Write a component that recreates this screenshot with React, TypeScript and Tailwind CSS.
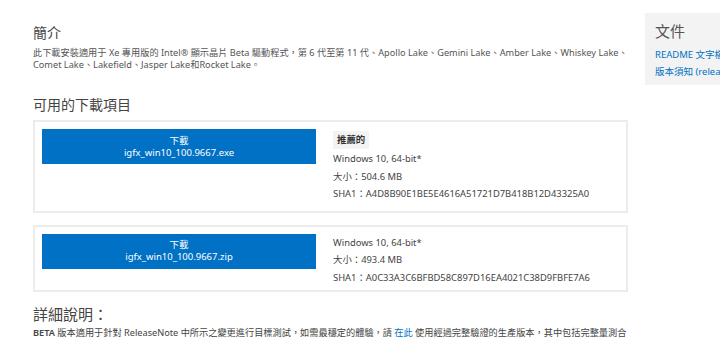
import React from "react";

const font = { fontFamily: '"Noto Sans", "Noto Sans CJK TC", sans-serif' };

function Card({
  file,
  recommended,
  size,
  sha,
  pad,
}: {
  file: string;
  recommended?: boolean;
  size: string;
  sha: string;
  pad: string;
}) {
  return (
    <div className={`border-2 border-[#ececec] flex px-[7px] ${pad}`}>
      <div className="w-[274px] h-[35px] bg-[#0071c5] text-white text-[9.5px] leading-[12px] flex flex-col items-center justify-center shrink-0">
        <span>下載</span>
        <span>{file}</span>
      </div>
      <div className="ml-[17px] text-[9.4px] leading-[17.5px] text-[#444] whitespace-nowrap">
        {recommended && (
          <div className="inline-block bg-[#f3f3f3] px-[4px] h-[18px] leading-[18px] text-[#333] font-semibold mt-[2px] mb-[1px]">
            推薦的
          </div>
        )}
        <div>Windows 10, 64-bit*</div>
        <div>大小：{size}</div>
        <div>SHA1：{sha}</div>
      </div>
    </div>
  );
}

export default function App() {
  return (
    <div className="w-[720px] h-[338px] overflow-hidden bg-white flex" style={font}>
      <div className="ml-[33px] w-[595px] shrink-0">
        <div className="pt-[23px] text-[14px] leading-[20px] text-[#444]">簡介</div>
        <div className="mt-[4px] text-[9.2px] leading-[11.5px] text-[#555] whitespace-nowrap">
          <div>
            此下載安裝適用于 Xe 專用版的 Intel® 顯示晶片 Beta 驅動程式，第 6 代至第 11 代、Apollo Lake、Gemini Lake、Amber Lake、Whiskey Lake、
          </div>
          <div>Comet Lake、Lakefield、Jasper Lake和Rocket Lake。</div>
        </div>
        <div className="mt-[25px] text-[14px] leading-[20px] text-[#444]">可用的下載項目</div>
        <div className="mt-[5px]">
          <Card
            file="igfx_win10_100.9667.exe"
            recommended
            size="504.6 MB"
            sha="A4D8B90E1BE5E4616A51721D7B418B12D43325A0"
            pad="pt-[7px] pb-[8px]"
          />
        </div>
        <div className="mt-[12px]">
          <Card
            file="igfx_win10_100.9667.zip"
            size="493.4 MB"
            sha="A0C33A3C6BFBD58C897D16EA4021C38D9FBFE7A6"
            pad="pt-[7px] pb-[4px]"
          />
        </div>
        <div className="mt-[11px] text-[15px] leading-[22px] text-[#444]">詳細說明：</div>
        <div className="mt-[2px] text-[9.2px] leading-[12px] text-[#444] whitespace-nowrap">
          <span className="font-semibold">BETA</span> 版本適用于針對 ReleaseNote 中所示之變更進行目標測試，如需最穩定的體驗，請{" "}
          <span className="text-[#0071c5]">在此</span> 使用經過完整驗證的生產版本，其中包括完整量測合
        </div>
      </div>
      <div className="ml-[17px] mt-[13px] h-[72px] w-[120px] shrink-0 bg-[#f3f3f3] pl-[10px] pt-[8px] whitespace-nowrap">
        <div className="text-[15px] leading-[20px] text-[#555]">文件</div>
        <div className="mt-[5px] text-[9.5px] leading-[17px] text-[#0071c5]">
          <div>README 文字檔</div>
          <div>版本須知 (release notes)</div>
        </div>
      </div>
    </div>
  );
}
